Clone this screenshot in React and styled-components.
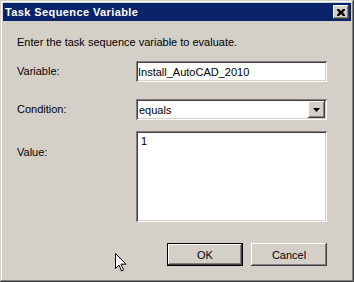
import React from "react";
import styled, { createGlobalStyle } from "styled-components";

const GlobalStyle = createGlobalStyle`
  html, body {
    margin: 0;
    padding: 0;
    background: #d4d0c8;
  }
  * {
    box-sizing: border-box;
  }
`;

const raised = `
  box-shadow: inset -1px -1px #404040, inset 1px 1px #ffffff,
    inset -2px -2px #808080, inset 2px 2px #d4d0c8;
`;

const sunken = `
  box-shadow: inset 1px 1px #808080, inset -1px -1px #ffffff,
    inset 2px 2px #404040, inset -2px -2px #d4d0c8;
`;

const Window = styled.div`
  position: relative;
  width: 354px;
  height: 282px;
  padding: 3px;
  background: #d4d0c8;
  box-shadow: inset -1px -1px #404040, inset 1px 1px #d4d0c8,
    inset -2px -2px #808080, inset 2px 2px #ffffff;
  font-family: "Liberation Sans", Tahoma, Arial, sans-serif;
  font-size: 11px;
  color: #000;
  display: flex;
  flex-direction: column;
`;

const TitleBar = styled.div`
  height: 18px;
  background: #0a246a;
  display: flex;
  align-items: center;
  justify-content: space-between;
  padding: 0 2px 0 2px;
`;

const Title = styled.span`
  color: #fff;
  font-weight: bold;
  font-size: 11px;
  letter-spacing: 0.4px;
  line-height: 18px;
`;

const CloseButton = styled.button`
  width: 16px;
  height: 14px;
  padding: 0;
  border: none;
  background: #d4d0c8;
  ${raised}
  display: flex;
  align-items: center;
  justify-content: center;
`;

const Body = styled.div`
  flex: 1;
  padding: 15px 24px 0 14px;
  display: flex;
  flex-direction: column;
`;

const Intro = styled.p`
  margin: 0;
  line-height: 13px;
`;

const Form = styled.div`
  margin-top: 12px;
  display: grid;
  grid-template-columns: 119px 191px;
  grid-template-rows: 21px 21px 91px;
  row-gap: 17px;
  align-items: center;
`;

const Label = styled.label`
  line-height: 13px;
  align-self: ${(p) => (p.$top ? "start" : "center")};
  margin-top: ${(p) => (p.$top ? "9px" : "0")};
`;

const Field = styled.div`
  height: 100%;
  background: #fff;
  ${sunken}
  padding: 0 2px;
  display: flex;
  align-items: center;
  white-space: nowrap;
`;

const Select = styled(Field)`
  padding: 2px 2px 2px 3px;
  justify-content: space-between;
`;

const DropButton = styled.div`
  width: 17px;
  height: 17px;
  background: #d4d0c8;
  ${raised}
  display: flex;
  align-items: center;
  justify-content: center;
`;

const TextArea = styled(Field)`
  align-items: flex-start;
  padding: 4px 5px;
  line-height: 13px;
  margin-top: -6px;
  height: 91px;
  align-self: start;
`;

const Buttons = styled.div`
  margin-top: 15px;
  display: flex;
  justify-content: flex-end;
  gap: 8px;
`;

const Button = styled.button`
  width: 76px;
  height: 23px;
  padding: 0;
  border: ${(p) => (p.$default ? "1px solid #000" : "none")};
  background: #d4d0c8;
  font-family: inherit;
  font-size: 11px;
  color: #000;
  ${raised}
`;

const Cursor = styled.svg`
  position: absolute;
  left: 115px;
  top: 253px;
`;

export default function App() {
  return (
    <>
      <GlobalStyle />
      <Window>
        <TitleBar>
          <Title>Task Sequence Variable</Title>
          <CloseButton aria-label="Close">
            <svg width="8" height="7" viewBox="0 0 8 7">
              <path
                d="M0 0h2l2 2 2-2h2v1L6 3.5 8 6v1H6L4 5 2 7H0V6l2-2.5L0 1z"
                fill="#000"
              />
            </svg>
          </CloseButton>
        </TitleBar>
        <Body>
          <Intro>Enter the task sequence variable to evaluate.</Intro>
          <Form>
            <Label>Variable:</Label>
            <Field>Install_AutoCAD_2010</Field>
            <Label>Condition:</Label>
            <Select>
              <span>equals</span>
              <DropButton>
                <svg width="7" height="4" viewBox="0 0 7 4">
                  <path d="M0 0h7L3.5 4z" fill="#000" />
                </svg>
              </DropButton>
            </Select>
            <Label $top>Value:</Label>
            <TextArea>1</TextArea>
          </Form>
          <Buttons>
            <Button $default>OK</Button>
            <Button>Cancel</Button>
          </Buttons>
        </Body>
        <Cursor width="12" height="20" viewBox="0 0 12 20">
          <path
            d="M0.5 0.5v15l3.5-3.5 2.5 6 2-1-2.5-5.8h5z"
            fill="#fff"
            stroke="#000"
            strokeWidth="1"
          />
        </Cursor>
      </Window>
    </>
  );
}
